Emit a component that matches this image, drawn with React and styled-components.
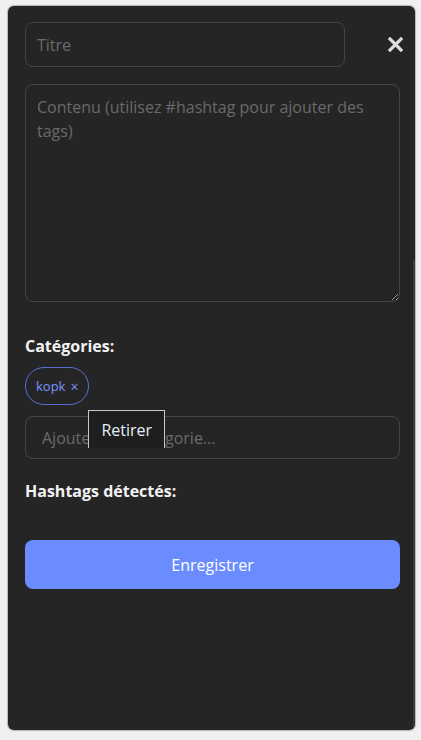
import React from "react"
import styled, { createGlobalStyle } from "styled-components"

const Global = createGlobalStyle`
  html, body {
    margin: 0;
    padding: 0;
    background: #eff0f2;
  }
  * { box-sizing: border-box; }
  body {
    font-family: "Open Sans", "Noto Sans", sans-serif;
  }
`

const Modal = styled.div`
  position: relative;
  margin: 6px 6px 10px 8px;
  width: 407px;
  height: 724px;
  background: #252525;
  border-radius: 6px;
  box-shadow: 0 0 1px 1px rgba(0,0,0,0.25);
  padding: 16px 15px 0 17px;
  display: flex;
  flex-direction: column;
  overflow: hidden;
`

const ScrollTrack = styled.div`
  position: absolute;
  right: 0;
  top: 254px;
  bottom: 0;
  width: 2px;
  background: #3a3a3a;
`

const HeaderRow = styled.div`
  display: flex;
  align-items: center;
  justify-content: space-between;
`

const Field = styled.input`
  width: ${p => p.$w || "100%"};
  height: ${p => p.$h || 45}px;
  background: transparent;
  border: 1px solid #454545;
  border-radius: 8px;
  padding: 0 ${p => p.$pad || 11}px;
  font-family: inherit;
  font-size: 16px;
  color: #ddd;
  outline: none;
  &::placeholder { color: #6a6a6a; }
`

const CloseBtn = styled.button`
  background: none;
  border: none;
  padding: 0;
  width: 30px;
  height: 30px;
  margin-right: -10px;
  display: flex;
  align-items: center;
  justify-content: center;
  cursor: pointer;
`

const Area = styled.textarea`
  margin-top: 17px;
  width: 100%;
  height: 218px;
  background: transparent;
  border: 1px solid #454545;
  border-radius: 8px;
  padding: 10px 11px;
  font-family: inherit;
  font-size: 16px;
  line-height: 24px;
  color: #ddd;
  resize: vertical;
  outline: none;
  &::placeholder { color: #6a6a6a; }
`

const Label = styled.div`
  margin-top: ${p => p.$top}px;
  font-size: 16px;
  line-height: 22px;
  font-weight: 700;
  color: #f2f2f2;
`

const ChipRow = styled.div`
  margin-top: 10px;
  display: flex;
  gap: 6px;
`

const Chip = styled.span`
  position: relative;
  height: 38px;
  padding: 0 10px;
  border: 1px solid #5b70d6;
  border-radius: 19px;
  display: inline-flex;
  align-items: center;
  gap: 5px;
  color: #7c93ff;
  font-size: 13px;
`

const ChipX = styled.span`
  font-size: 14px;
  line-height: 1;
  margin-top: 2px;
  cursor: pointer;
`

const Tooltip = styled.div`
  position: absolute;
  left: 100%;
  top: 42px;
  width: 77px;
  height: 38px;
  background: #1e1e1e;
  border: 1px solid #c8c8c8;
  border-bottom: none;
  color: #e6eef8;
  font-size: 16px;
  line-height: 20px;
  padding: 9px 0 0 12px;
  z-index: 2;
  white-space: nowrap;
`

const CatInput = styled(Field)`
  margin-top: 11px;
`

const SaveBtn = styled.button`
  margin-top: 38px;
  width: 100%;
  height: 49px;
  border: none;
  border-radius: 8px;
  background: #6b8cff;
  color: #fff;
  font-family: inherit;
  font-size: 16px;
  cursor: pointer;
`

export default function App() {
  return (
    <>
      <Global />
      <Modal>
        <HeaderRow>
          <Field $w="320px" placeholder="Titre" />
          <CloseBtn aria-label="Fermer">
            <svg width="15" height="15" viewBox="0 0 15 15">
              <path d="M2 2 L13 13 M13 2 L2 13" stroke="#dcdcdc" strokeWidth="3.2" strokeLinecap="square" />
            </svg>
          </CloseBtn>
        </HeaderRow>
        <Area placeholder="Contenu (utilisez #hashtag pour ajouter des tags)" />
        <Label $top={33}>Catégories:</Label>
        <ChipRow>
          <Chip>
            kopk <ChipX>×</ChipX>
            <Tooltip>Retirer</Tooltip>
          </Chip>
        </ChipRow>
        <CatInput $h={43} $pad={16} placeholder="Ajouter une catégorie..." />
        <Label $top={21}>Hashtags détectés:</Label>
        <SaveBtn>Enregistrer</SaveBtn>
        <ScrollTrack />
      </Modal>
    </>
  )
}
